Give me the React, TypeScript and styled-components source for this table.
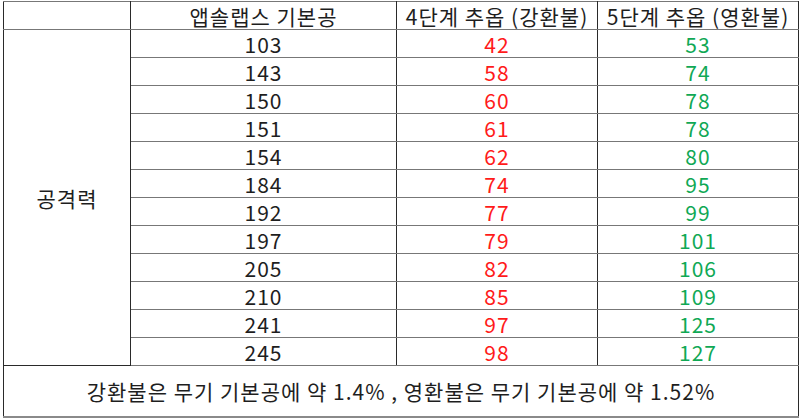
import React from "react";
import styled, { createGlobalStyle } from "styled-components";

const Global = createGlobalStyle`
  html, body { margin: 0; padding: 0; background: #fff; }
  body { font-family: "Noto Sans CJK KR", "Noto Sans", sans-serif; }
`;

const Page = styled.div`
  width: 800px;
  height: 419px;
  padding: 1px 0 0 3px;
  box-sizing: border-box;
  overflow: hidden;
`;

const Table = styled.table`
  border-collapse: collapse;
  table-layout: fixed;
  width: 795px;
  font-size: 21px;
  letter-spacing: 1px;
  color: #1e1e1e;
`;

const Col = styled.col<{ $w: number }>`
  width: ${(p) => p.$w}px;
`;

const Cell = styled.td<{ $tone?: "red" | "green" }>`
  height: 27px;
  padding: 0;
  text-align: center;
  vertical-align: middle;
  line-height: 26px;
  white-space: nowrap;
  border-top: 1px solid #777;
  border-bottom: 1px solid #777;
  border-left: 1px solid #2a2a2a;
  border-right: 1px solid #2a2a2a;
  color: ${(p) =>
    p.$tone === "red" ? "#ff1a1a" : p.$tone === "green" ? "#10a855" : "#1e1e1e"};
`;

const LabelCell = styled(Cell)`
  border-bottom: 1px solid #2a2a2a;
`;

const FooterCell = styled(Cell)`
  height: 50px;
  line-height: 46px;
  border-bottom: 2px solid #8a8a8a;
`;

const rows: [number, number, number][] = [
  [103, 42, 53],
  [143, 58, 74],
  [150, 60, 78],
  [151, 61, 78],
  [154, 62, 80],
  [184, 74, 95],
  [192, 77, 99],
  [197, 79, 101],
  [205, 82, 106],
  [210, 85, 109],
  [241, 97, 125],
  [245, 98, 127],
];

export default function App() {
  return (
    <>
      <Global />
      <Page>
        <Table>
          <colgroup>
            <Col $w={127} />
            <Col $w={266} />
            <Col $w={201} />
            <Col $w={201} />
          </colgroup>
          <tbody>
            <tr>
              <Cell />
              <Cell>앱솔랩스 기본공</Cell>
              <Cell>4단계 추옵 (강환불)</Cell>
              <Cell>5단계 추옵 (영환불)</Cell>
            </tr>
            {rows.map(([base, red, green], i) => (
              <tr key={base}>
                {i === 0 && <LabelCell rowSpan={rows.length}>공격력</LabelCell>}
                <Cell>{base}</Cell>
                <Cell $tone="red">{red}</Cell>
                <Cell $tone="green">{green}</Cell>
              </tr>
            ))}
            <tr>
              <FooterCell colSpan={4}>
                강환불은 무기 기본공에 약 1.4% , 영환불은 무기 기본공에 약 1.52%
              </FooterCell>
            </tr>
          </tbody>
        </Table>
      </Page>
    </>
  );
}
